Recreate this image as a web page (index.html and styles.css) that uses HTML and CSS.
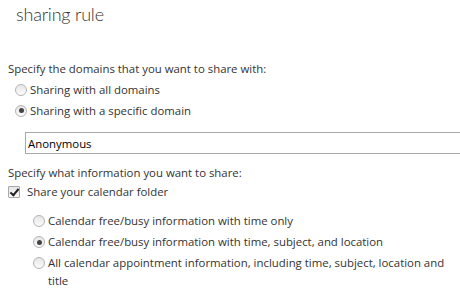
FILE: index.html
```html
<!DOCTYPE html>
<html lang="en">
<head>
  <meta charset="UTF-8">
  <title>sharing rule</title>
  <link rel="stylesheet" href="styles.css">
</head>
<body>
  <h1 class="title">sharing rule</h1>

  <div class="group">
    <div class="prompt">Specify the domains that you want to share with:</div>
    <label class="option">
      <input type="radio" name="domain" class="radio">
      <span>Sharing with all domains</span>
    </label>
    <label class="option">
      <input type="radio" name="domain" class="radio" checked>
      <span>Sharing with a specific domain</span>
    </label>
    <input type="text" class="domain-box" value="Anonymous">
  </div>

  <div class="group">
    <div class="prompt">Specify what information you want to share:</div>
    <label class="option check-row">
      <input type="checkbox" class="check" checked>
      <span>Share your calendar folder</span>
    </label>
    <div class="sub-options">
      <label class="option">
        <input type="radio" name="detail" class="radio">
        <span>Calendar free/busy information with time only</span>
      </label>
      <label class="option">
        <input type="radio" name="detail" class="radio" checked>
        <span>Calendar free/busy information with time, subject, and location</span>
      </label>
      <label class="option">
        <input type="radio" name="detail" class="radio">
        <span>All calendar appointment information, including time, subject, location and title</span>
      </label>
    </div>
  </div>
</body>
</html>
```

FILE: styles.css
```css
body {
  margin: 0;
  padding: 0 0 0 8px;
  font-family: "Open Sans", sans-serif;
  font-size: 11.4px;
  color: #333;
  background: #fff;
  overflow: hidden;
}

.title {
  margin: 0 0 31px 8px;
  font-family: Lato, sans-serif;
  font-size: 18px;
  font-weight: 300;
  letter-spacing: -0.2px;
  line-height: 28px;
  color: #333;
}

.prompt {
  line-height: 20px;
}

.option {
  display: flex;
  align-items: flex-start;
  gap: 3px;
  padding: 1.5px 0;
  line-height: 18px;
  margin-left: 7px;
}

.radio,
.check {
  appearance: none;
  flex: none;
  width: 12px;
  height: 12px;
  margin: 3px 0 0 0;
  border: 1px solid #b4b4b4;
  background: linear-gradient(#e6e6e6, #fbfbfb);
}

.radio {
  border-radius: 50%;
  position: relative;
}

.radio:checked::after {
  content: "";
  position: absolute;
  top: 2.5px;
  left: 2.5px;
  width: 5px;
  height: 5px;
  border-radius: 50%;
  background: #444;
}

.check {
  position: relative;
  border-radius: 1px;
  border-color: #a8a8a8;
}

.check:checked::after {
  content: "";
  position: absolute;
  left: 3px;
  top: 0;
  width: 3px;
  height: 7px;
  border: solid #222;
  border-width: 0 2px 2px 0;
  transform: rotate(40deg);
}

.domain-box {
  display: block;
  margin: 11px 0 9px 17px;
  width: 435px;
  height: 22px;
  box-sizing: border-box;
  padding: 0 2px;
  border: 1px solid #a9a9a9;
  border-right: 0;
  font-family: inherit;
  font-size: 11.4px;
  color: #000;
  outline: none;
}

.check-row {
  margin-left: 0;
  gap: 7px;
  padding: 0;
}

.sub-options {
  margin: 9.5px 0 0 18px;
  width: 425px;
}
```
